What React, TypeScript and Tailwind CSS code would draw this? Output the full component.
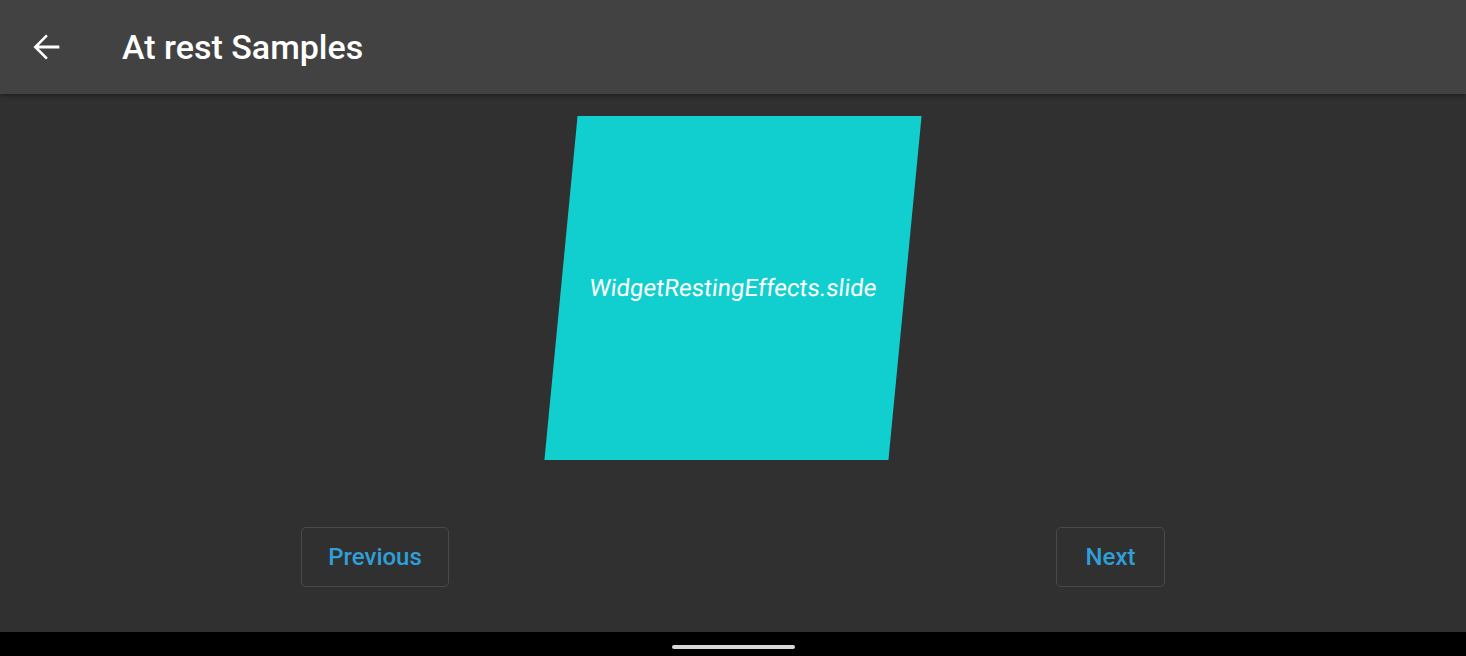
export default function App() {
  return (
    <div
      className="flex h-[656px] w-[1466px] flex-col overflow-hidden bg-[#303030]"
      style={{ fontFamily: 'Roboto, "Noto Sans", sans-serif' }}
    >
      {/* Toolbar */}
      <header className="relative z-10 flex h-[94px] shrink-0 items-center bg-[#424242] shadow-[0_2px_4px_rgba(0,0,0,0.35)]">
        <button className="ml-[25px] flex h-[42px] w-[42px] items-center justify-center text-white">
          <svg viewBox="0 0 24 24" className="h-[40px] w-[40px]" fill="currentColor">
            <path d="M20 11.1H7.6l5.5-5.5L12 4.5l-7.5 7.5 7.5 7.5 1.1-1.1-5.5-5.5H20v-1.8z" />
          </svg>
        </button>
        <h1 className="ml-[55px] text-[34px] font-medium text-white">At rest Samples</h1>
      </header>

      {/* Content */}
      <main className="flex flex-1 flex-col items-center">
        <div className="mt-[22px] flex h-[344px] w-[344px] -skew-x-[5.5deg] items-center justify-center bg-[#12cfcf]">
          <span className="text-[24px] font-normal text-white">WidgetRestingEffects.slide</span>
        </div>

        <div className="mt-[67px] flex w-[864px] justify-between">
          <button className="h-[60px] w-[148px] rounded-[5px] border border-[#4a4a4a] text-[24px] font-medium text-[#2e9fd8]">
            Previous
          </button>
          <button className="h-[60px] w-[109px] rounded-[5px] border border-[#4a4a4a] text-[24px] font-medium text-[#2e9fd8]">
            Next
          </button>
        </div>
      </main>

      {/* System nav bar */}
      <div className="flex h-[24px] shrink-0 items-center justify-center bg-black">
        <div className="mt-[6px] h-[4px] w-[123px] rounded-full bg-[#d8d8d8]" />
      </div>
    </div>
  );
}
